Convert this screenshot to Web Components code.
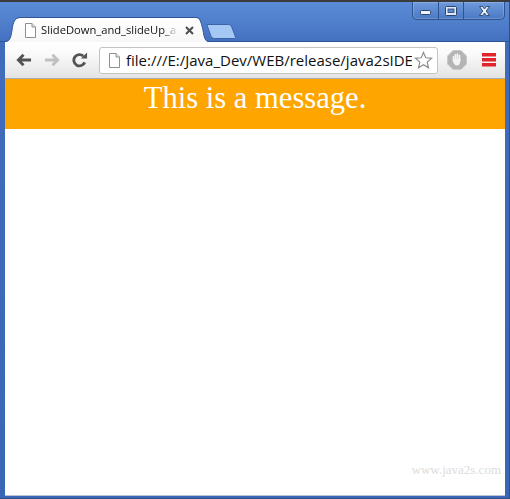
<!DOCTYPE html>
<html><head><meta charset="utf-8"><style>
html,body{margin:0;padding:0;background:#fff;overflow:hidden}
</style></head><body>
<browser-window>
  <window-controls slot="controls"></window-controls>
  <tab-strip slot="tabs">
    <browser-tab>SlideDown_and_slideUp_a</browser-tab>
    <new-tab></new-tab>
  </tab-strip>
  <browser-toolbar slot="toolbar" url="file:///E:/Java_Dev/WEB/release/java2sIDE"></browser-toolbar>
  <message-banner>This is a message.</message-banner>
  <water-mark>www.java2s.com</water-mark>
</browser-window>
<script>
function def(name, html, init){
  customElements.define(name, class extends HTMLElement{
    constructor(){super();this.attachShadow({mode:'open'}).innerHTML=html;}
    connectedCallback(){ if(init) init.call(this); }
  });
}
const pageIcon=`<svg width="13" height="15" viewBox="0 0 13 15" style="flex:none"><path d="M1.5.5H8L11.5 4V14.5H1.5Z" fill="#fff" stroke="#8f8f8f"/><path d="M8 .5V4H11.5" fill="#e8e8e8" stroke="#8f8f8f"/></svg>`;
def('browser-window',`<style>
:host{display:flex;flex-direction:column;box-sizing:border-box;width:510px;height:499px;
 background:linear-gradient(#5b8bd6 0,#4a78c6 30px,#3f6cbb 44px,#3a66b8 100%);
 border:solid #2f4f86;border-width:2px 1px 1px 0;border-top-color:#3b3b3b}
.top{display:flex;flex-direction:column;height:40px;flex:none}
.ctl{display:flex;justify-content:flex-end;padding-right:4px;height:0}
.body{flex:1;display:flex;flex-direction:column;margin:0 4px 3px 5px;background:#fff;box-shadow:0 1px 0 #b9c3d2;min-height:0}
.page{flex:1;display:flex;flex-direction:column;min-height:0;font-family:"Liberation Serif",serif}
</style>
<div class="ctl"><slot name="controls"></slot></div>
<div class="top"><slot name="tabs"></slot></div>
<div class="body"><slot name="toolbar"></slot><div class="page"><slot></slot></div></div>`);
def('window-controls',`<style>
:host{display:flex;height:18px;width:93px;box-sizing:border-box;border:1px solid #2e548f;border-top:0;border-radius:0 0 5px 5px;
 background:linear-gradient(#6f9bdc,#4a78c4);box-shadow:inset 0 0 0 1px rgba(255,255,255,.18)}
span{display:flex;align-items:center;justify-content:center;border-right:1px solid #2e548f}
span:last-child{border:0}
</style>
<span style="width:25px"><svg width="11" height="6" viewBox="0 0 11 6" style="margin-top:5px"><rect x=".5" y=".5" width="10" height="4" rx="1" fill="#eef3fb" stroke="#29456f"/></svg></span>
<span style="width:24px"><svg width="12" height="10" viewBox="0 0 12 10"><rect x=".5" y=".5" width="11" height="9" rx="1" fill="#dfe9f8" stroke="#29456f"/><rect x="3" y="3" width="6" height="3.5" fill="#5d89cf" stroke="#29456f" stroke-width=".8"/></svg></span>
<span style="flex:1"><svg width="13" height="10" viewBox="0 0 13 10"><path d="M1.5 .5H4.5L6.5 3 8.5 .5H11.5L8.2 5 11.5 9.5H8.5L6.5 7 4.5 9.5H1.5L4.8 5Z" fill="#eef3fb" stroke="#29456f" stroke-width=".9"/></svg></span>`);
def('tab-strip',`<style>
:host{display:flex;align-items:flex-end;height:40px;padding-left:5px;box-sizing:border-box;box-shadow:inset 0 -1px 0 #2f5596}
</style><slot></slot>`);
def('browser-tab',`<style>
:host{display:grid;width:204px;height:25px;flex:none}
svg.s{grid-area:1/1}
.c{grid-area:1/1;display:flex;align-items:center;padding:1px 0 0 19px;height:24px}
.t{font:11.2px/16px "Open Sans","Liberation Sans",sans-serif;color:#111;margin-left:4px;width:137px;overflow:hidden;white-space:nowrap;
 -webkit-mask-image:linear-gradient(90deg,#000 122px,transparent 137px);mask-image:linear-gradient(90deg,#000 122px,transparent 137px)}
.x{margin-left:7px;display:flex}
</style>
<svg class="s" width="204" height="25" viewBox="0 0 204 25"><defs><linearGradient id="g" x1="0" y1="0" x2="0" y2="1"><stop offset="0" stop-color="#fff"/><stop offset="1" stop-color="#f7f7f7"/></linearGradient></defs>
<path d="M0 25C5 25 6 20 7 13 8 5 10 1 15 1H191C195 1 196 5 198 13 199 20 200 25 204 25Z" fill="url(#g)"/>
<path d="M0 24.500C5 24.500 6 20 7 13 8 5 10 .5 15 .5H191C195 .5 196 5 198 13 199 20 200 24.500 204 24.500" fill="none" stroke="#2f5596"/></svg>
<div class="c">${pageIcon}<span class="t"><slot></slot></span><span class="x"><svg width="9" height="9" viewBox="0 0 9 9"><path d="M1 1L8 8M8 1L1 8" stroke="#4d4d4d" stroke-width="2"/></svg></span></div>`);
def('new-tab',`<style>:host{display:block;width:32px;height:15px;margin:0 0 3px -3px;flex:none}</style>
<svg width="32" height="15" viewBox="0 0 32 15"><path d="M.8.5H22.500C25 .5 25.500 2 26.500 5L29.500 13C30 14 29.500 14.500 28 14.500H8.500C6.500 14.500 5.500 13.500 4.500 11Z" fill="#a5c7f3" stroke="#3a63a8"/></svg>`);
def('browser-toolbar',`<style>
:host{display:flex;align-items:center;height:37px;box-sizing:border-box;flex:none;padding:0 0 0 4px;
 background:linear-gradient(#fff,#fbfbfb 30%,#e3e3e3);border-bottom:1px solid #ababab}
button{all:unset;display:flex;align-items:center;justify-content:center;height:20px;flex:none}
.url{display:flex;align-items:center;box-sizing:border-box;width:339px;height:27px;background:#fff;border:1px solid #c4c4c4;border-radius:3px;padding-left:8px;flex:none}
.u{font:15px "Open Sans","Liberation Sans",sans-serif;color:#111;margin-left:5px;width:286px;overflow:hidden;white-space:nowrap}
.star{margin-left:2px;display:flex}
</style>
<button style="width:29px"><svg width="16" height="14" viewBox="0 0 17 14"><path d="M16 7H3M8 1.500 2.500 7 8 12.500" fill="none" stroke="#535353" stroke-width="3"/></svg></button>
<button style="width:28px;margin-right:2px"><svg width="16" height="14" viewBox="0 0 17 14"><path d="M1 7H14M9 1.500 14.500 7 9 12.500" fill="none" stroke="#c0c0c0" stroke-width="3"/></svg></button>
<button style="width:24px;margin-right:3px;justify-content:flex-start;padding-left:4px"><svg width="16" height="16" viewBox="0 0 17 16"><path d="M13.500 10.500A6 6 0 1 1 12 3.800" fill="none" stroke="#535353" stroke-width="3"/><path d="M9.500 6.500H16V0Z" fill="#535353"/></svg></button>
<div class="url">${pageIcon}<span class="u"></span><span class="star"><svg width="19" height="18" viewBox="0 0 20 19"><path d="M10 1.500 12.400 7.200 18.500 7.700 13.900 11.700 15.300 17.700 10 14.500 4.700 17.700 6.100 11.700 1.500 7.700 7.600 7.200Z" fill="#fff" stroke="#8a8a8a" stroke-width="1.200"/></svg></span></div>
<button style="width:20px;margin-left:9px"><svg width="20" height="20" viewBox="0 0 20 20"><path d="M6 .5H14L19.500 6V14L14 19.500H6L.5 14V6Z" fill="#b4b4b4" stroke="#c9c9c9"/><path d="M6.500 11V6.500M8.500 10V4.500M10.500 10V4.200M12.500 10V5.500" stroke="#f3f3f3" stroke-width="1.700" stroke-linecap="round"/><path d="M5.800 9.500C6 13 7.500 15.500 10 15.500S13.500 13 13.500 9L12 9H7Z" fill="#f3f3f3"/></svg></button>
<button style="width:14px;margin-left:15px"><svg width="14" height="14" viewBox="0 0 14 14"><path d="M0 0H14V3.500H0ZM0 5H14V8.500H0ZM0 10H14V13.500H0Z" fill="#e0262c"/></svg></button>`,
function(){this.shadowRoot.querySelector('.u').textContent=this.getAttribute('url');});
def('message-banner',`<style>
:host{display:block;height:50px;background:#ffa500;color:#fff;text-align:center;font:30.6px/38px "Liberation Serif",serif;flex:none}
</style><slot></slot>`);
def('water-mark',`<style>
:host{display:block;margin-top:auto;margin-bottom:17px;text-align:right;padding-right:4px;color:#dcdcdc;font:13px/16px "Liberation Serif",serif}
</style><slot></slot>`);
</script>
</body></html>
